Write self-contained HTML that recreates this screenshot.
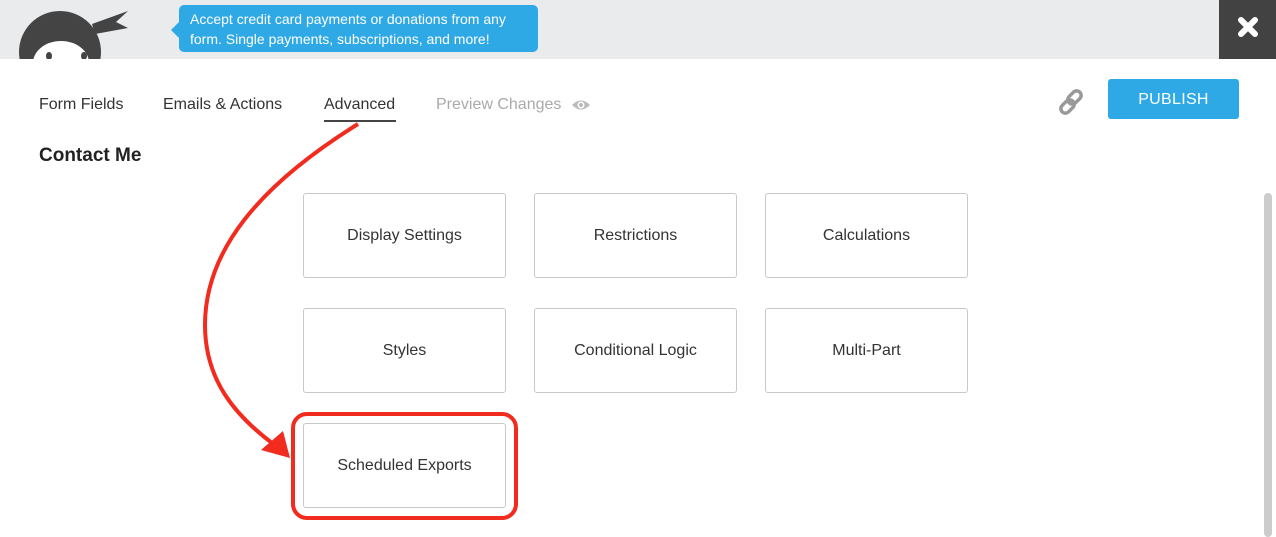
<!DOCTYPE html>
<html><head><meta charset="utf-8"><style>
*{margin:0;padding:0;box-sizing:border-box}
body{width:1276px;height:537px;overflow:hidden;background:#fff;font-family:"Liberation Sans",Arial,sans-serif;position:relative;color:#333}
.top{position:absolute;left:0;top:0;width:1276px;height:59px;background:#eaebed;overflow:hidden}
.close{position:absolute;right:0;top:0;width:57px;height:59px;background:#424242}
.tip{position:absolute;left:179px;top:5px;width:359px;height:47px;background:#2ea9e6;border-radius:5px;color:#fff;font-size:14px;line-height:20px;padding:4px 0 0 11px}
.tip:before{content:"";position:absolute;left:-8px;top:17px;border:8px solid transparent;border-left:0;border-right-color:#2ea9e6}
.nav{position:absolute;top:96px;font-size:16px;color:#333}
.card{position:absolute;width:203px;height:85px;border:1px solid #c8c8c8;border-radius:3px;display:flex;align-items:center;justify-content:center;font-size:16px;color:#333}
.pub{position:absolute;left:1108px;top:79px;width:131px;height:40px;background:#2ea9e6;border-radius:3px;color:#fff;font-size:16px;text-align:center;line-height:41px;letter-spacing:.3px}
</style></head><body>
<div class="top">
<svg width="150" height="59" style="position:absolute;left:0;top:0">
<path d="M92,24 L128,11 L116,22 L128,28 L95,34Z" fill="#444"/>
<circle cx="60" cy="52" r="41" fill="#444"/>
<ellipse cx="61" cy="63" rx="28" ry="22" fill="#fff"/>
<ellipse cx="49" cy="56" rx="3" ry="4" fill="#444"/>
<ellipse cx="84" cy="56" rx="3" ry="4" fill="#444"/>
</svg>
<div class="tip">Accept credit card payments or donations from any<br>form. Single payments, subscriptions, and more!</div>
<div class="close"><svg width="57" height="59"><path d="M22,20 L36,34 M36,20 L22,34" stroke="#fff" stroke-width="6" stroke-linecap="round"/></svg></div>
</div>
<div class="nav" style="left:39px">Form Fields</div>
<div class="nav" style="left:163px">Emails &amp; Actions</div>
<div class="nav" style="left:324px">Advanced</div>
<div style="position:absolute;left:324px;top:120px;width:72px;height:2px;background:#444"></div>
<div class="nav" style="left:436px;color:#aaa">Preview Changes</div>
<svg width="20" height="14" style="position:absolute;left:571px;top:98px"><path d="M1,7 Q10,-2 19,7 Q10,16 1,7Z" fill="#bbb"/><circle cx="10" cy="7" r="3.5" fill="#fff"/><circle cx="10" cy="7" r="2" fill="#bbb"/></svg>
<svg width="30" height="30" style="position:absolute;left:1058px;top:88px"><g fill="none" stroke="#999" stroke-width="3.5"><rect x="12" y="2" width="9" height="15" rx="4.5" transform="rotate(45 16.5 9.5)"/><rect x="5" y="11" width="9" height="15" rx="4.5" transform="rotate(45 9.5 18.5)"/></g></svg>
<div class="pub">PUBLISH</div>
<div style="position:absolute;left:39px;top:145px;font-size:19px;font-weight:bold;color:#222">Contact Me</div>
<div style="position:absolute;left:1264px;top:193px;width:8px;height:344px;background:#ccc;border-radius:4px"></div>
<div class="card" style="left:303px;top:193px">Display Settings</div>
<div class="card" style="left:534px;top:193px">Restrictions</div>
<div class="card" style="left:765px;top:193px">Calculations</div>
<div class="card" style="left:303px;top:308px">Styles</div>
<div class="card" style="left:534px;top:308px">Conditional Logic</div>
<div class="card" style="left:765px;top:308px">Multi-Part</div>
<div class="card" style="left:303px;top:423px">Scheduled Exports</div>
<svg width="1276" height="537" style="position:absolute;left:0;top:0;pointer-events:none">
<rect x="293" y="414" width="223" height="104" rx="14" fill="none" stroke="#f22b1f" stroke-width="4"/>
<path d="M358,124 C260,185 205,250 205,325 C205,380 235,415 272,443" fill="none" stroke="#f22b1f" stroke-width="4"/>
<polygon points="290,458 261,450 283,431" fill="#f22b1f"/>
</svg>
</body></html>
